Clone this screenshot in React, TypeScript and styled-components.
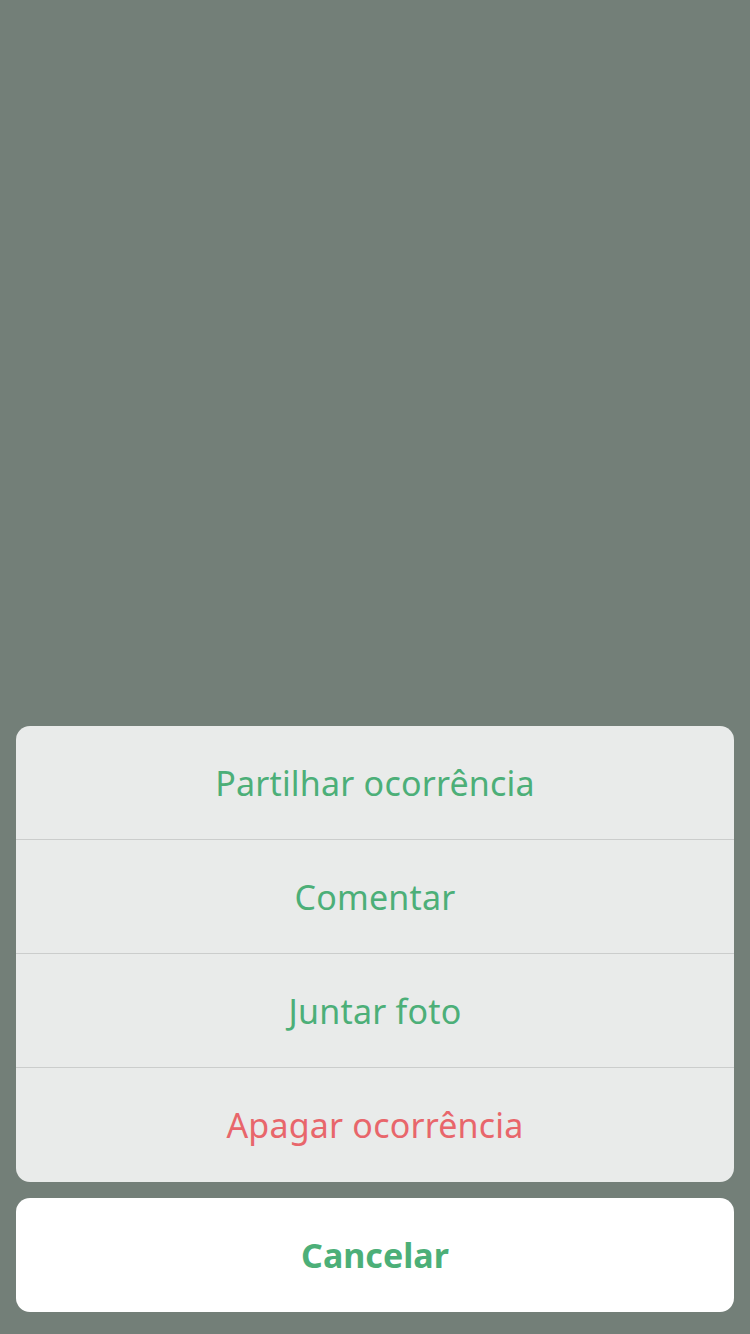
import React from "react";
import styled, { createGlobalStyle } from "styled-components";

const Global = createGlobalStyle`
  html, body { margin: 0; padding: 0; }
  body { background: #737f78; font-family: "Noto Sans", "DejaVu Sans", sans-serif; }
`;

const Screen = styled.div`
  width: 750px;
  height: 1334px;
  box-sizing: border-box;
  display: flex;
  flex-direction: column;
  justify-content: flex-end;
  gap: 16px;
  padding: 0 16px 22px 16px;
  background: #737f78;
`;

const Group = styled.div`
  background: #e9ebea;
  border-radius: 14px;
  overflow: hidden;
  display: flex;
  flex-direction: column;
`;

const Action = styled.div<{ $danger?: boolean }>`
  height: 113px;
  display: flex;
  align-items: center;
  justify-content: center;
  font-size: 34px;
  letter-spacing: 0.2px;
  color: ${(p) => (p.$danger ? "#e8666b" : "#4caf78")};
  & + & { border-top: 1px solid #cbcdcc; }
  &:last-child { height: 114px; }
`;

const Cancel = styled.div`
  height: 114px;
  background: #ffffff;
  border-radius: 14px;
  display: flex;
  align-items: center;
  justify-content: center;
  font-size: 34px;
  font-weight: 700;
  color: #4caf78;
`;

export default function App() {
  return (
    <>
      <Global />
      <Screen>
        <Group>
          <Action>Partilhar ocorrência</Action>
          <Action>Comentar</Action>
          <Action>Juntar foto</Action>
          <Action $danger>Apagar ocorrência</Action>
        </Group>
        <Cancel>Cancelar</Cancel>
      </Screen>
    </>
  );
}
